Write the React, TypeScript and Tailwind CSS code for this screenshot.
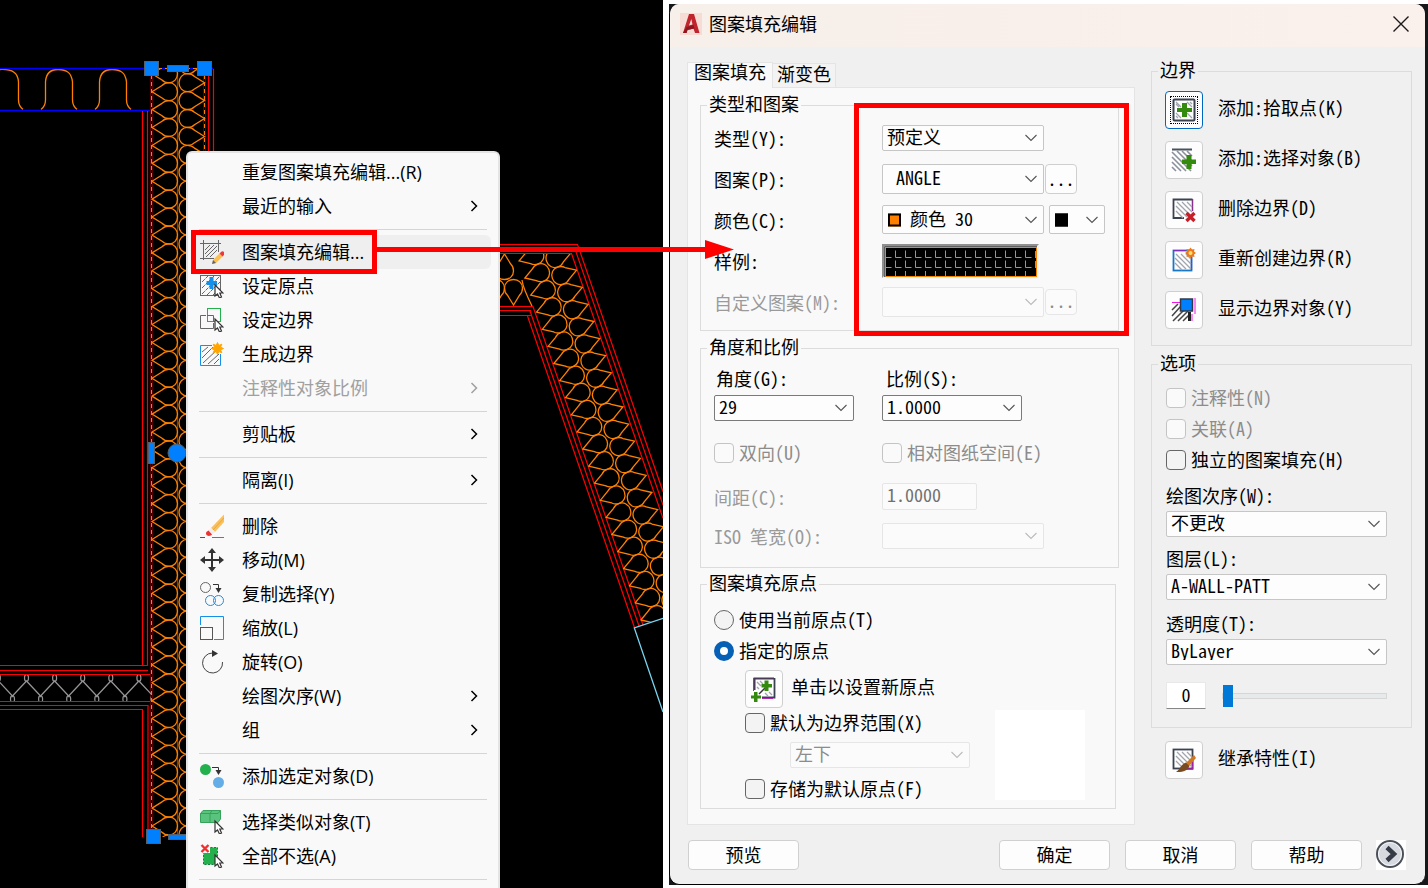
import { type ReactNode, useId } from 'react'

const range = (n: number, from = 0) => Array.from({ length: n }, (_, i) => i + from)

/* ---------- CAD drawing ---------- */

const DROP = 'M0 0 L10 -6.2 C12 -8.4 14.5 -9 17 -9 C22 -9 25.5 -5 25.5 0 C25.5 5 22 9 17 9 C14.5 9 12 8.4 10 6.2 Z'

function Drawing() {
  return (
    <svg className="absolute inset-0 size-full" aria-hidden="true" fill="none">
      <defs>
        <clipPath id="wall-v"><rect x="150" y="69" width="56" height="768" /></clipPath>
        <clipPath id="wall-d"><path d="M498 254 H572 L700 625 L660 618 L642 625 L533 307 H498 Z" /></clipPath>
        <clipPath id="wall-h"><rect x="0" y="675" width="151" height="26" /></clipPath>
      </defs>

      <g stroke="#ff8000" strokeWidth="1.300">
        <path d="M0 69.500 C13 69 18 73 18.500 82 V100 C18.500 105 20 107 23 109.500" />
        {[0, 54].map((dx) => (
          <path key={dx} transform={`translate(${dx} 0)`} d="M41 109.500 C44 107 45.500 104 45.500 100 V82 C46 73 50 69.500 58 69.500 C67 69.500 71.500 73 72.500 82 V100 C72.500 104 74 107 77 109.500" />
        ))}
      </g>
      <path d="M0 68.500 H213 M0 110.500 H151" stroke="#0000ff" strokeWidth="1.400" />
      <path d="M208.500 69 V160 M213.500 69 V160 M142.500 111 V665 M147.500 111 V666 M0 665.500 H148 M0 670.500 H148 M0 674.500 H151 M0 701.500 H151 M0 705.500 H148 V831 M0 709.500 H142.500 V837" stroke="#ff0000" strokeWidth="1.200" />
      <path d="M150.500 69 V836 M152.500 69 V836 M203.500 69 V160 M205.500 69 V160" stroke="#5a0000" />
      <path d="M151.500 75 V836 M204.500 75 V160 M158 68.500 H197" stroke="#ff8000" strokeDasharray="4 3" />

      <g clipPath="url(#wall-v)" stroke="#ff8000" strokeWidth="1.300">
        {range(44, -1).map((i) => (
          <g key={i}>
            <path transform={`translate(152 ${91.7 + i * 17.91})`} d={DROP} />
            <path transform={`translate(204.500 ${82.7 + i * 17.91}) scale(-1 1)`} d={DROP} />
          </g>
        ))}
        <path d="M177.500 70 V836" strokeOpacity="0.5" />
      </g>

      <g clipPath="url(#wall-h)" stroke="#969696" strokeWidth="1.200">
        {range(7, -1).map((i) => (
          <g key={i} transform={`translate(${12.5 + i * 28.1} 0)`}>
            <path d="M-1 697 L14 681 L29 697" />
            <ellipse cx="0" cy="699" rx="2" ry="3.500" />
            <ellipse cx="14" cy="678" rx="2" ry="3.500" />
          </g>
        ))}
      </g>

      <path d="M498 244.500 H577.500 L663 491.700 M575 249 L663 505 M498 253.500 H571.500 L663 518.300 M498 306.500 H533 L643 625 M498 310.500 H531 M530 311 L639 626 M498 315.500 H531 M527.500 316 L634.500 627.500" stroke="#ff0000" strokeWidth="1.200" />
      <g clipPath="url(#wall-d)" stroke="#ff8000" strokeWidth="1.300">
        {range(22, -4).map((i) => (
          <path key={`l${i}`} transform={`translate(${542.3 + i * 5.8} ${329.3 + i * 17.1}) rotate(-18.7)`} d={DROP} />
        ))}
        {range(23, -2).map((i) => (
          <path key={`r${i}`} transform={`translate(${582.3 + i * 5.8} ${287.3 + i * 17.1}) rotate(-18.7) scale(-1 1)`} d={DROP} />
        ))}
        <path transform="translate(513.500 305) rotate(-90)" d={DROP} />
        <path transform="translate(495.500 305) rotate(-90)" d={DROP} />
        <path transform="translate(504.500 254) rotate(90)" d={DROP} />
        <path d="M522 280 C523 288 527 296 532 306" />
      </g>
      <path d="M663 618.300 L634.300 628 L663 712" stroke="#7ad4f0" strokeWidth="1.300" />

      <g fill="#0080ff" stroke="#55606c">
        <rect x="144.500" y="61.500" width="14" height="14" />
        <rect x="197.500" y="61.500" width="14" height="14" />
        <rect x="167.500" y="65.500" width="21" height="6" />
        <rect x="146.500" y="829.500" width="14" height="14" />
        <rect x="168.500" y="834.500" width="21" height="5" />
        <rect x="148.500" y="442.500" width="6" height="21" />
        <circle cx="177" cy="453" r="9" />
      </g>
    </svg>
  )
}

/* ---------- Icons of the context menu ---------- */

const CURSOR = 'M15 11 V22 L17.500 20 L19.500 24 L21.500 23 L19.800 19 H23 Z'

const Cursor = () => <path d={CURSOR} fill="#fff" stroke="#333" strokeWidth="1.200" />

const HATCH = 'M2 8 L8 2 M2 14 L14 2 M2 20 L20 2 M7 21 L21 7 M13 21 L21 13'

function Glyph({ children }: { children?: ReactNode }) {
  return <svg className="size-6 shrink-0" viewBox="0 0 24 24" fill="none" aria-hidden="true">{children}</svg>
}

const icons: Record<string, ReactNode> = {
  edit: (
    <>
      <path d="M3.500 0 V20 M18.500 0 V12 M0 3.500 H21 M0 18.500 H14" stroke="#666" />
      <path d="M5 10 L10 5 M5 14 L14 5 M6 17 L17 6 M10 17 L17 10" stroke="#666" />
      <path d="M13 20 L19.500 13.500 L22.500 16.500 L16 23 L12.500 23.800 Z" fill="#fbbf4a" />
      <path d="M12 24 L13 20 L16 23 Z" fill="#666" />
      <path d="M19.500 13.500 L21 12 A2 2 0 0 1 24 15 L22.500 16.500 Z" fill="#f03838" />
    </>
  ),
  origin: (
    <>
      <rect x="0.500" y="1.500" width="20" height="20" stroke="#666" />
      <path d={HATCH} stroke="#666" strokeDasharray="4 1" />
      <path d="M9.500 3 H13.500 V7 H17 V11 H13.500 V15 H9.500 V11 H6.500 V7 H9.500 Z" fill="#1590ea" />
      <Cursor />
    </>
  ),
  boundary: (
    <>
      <path d="M6 7.500 H0.500 V20.500 H13.500 V15" stroke="#666" />
      <rect x="7.500" y="0.500" width="13" height="13" stroke="#22b14c" />
      <path d="M7 7.500 H13.500 V14" stroke="#666" />
      <Cursor />
    </>
  ),
  generate: (
    <>
      <path d="M12 3.500 H0.500 V23.500 H20.500 V12" stroke="#1590ea" />
      <path d="M2 10 L8 5 M2 16 L13 5 M3 21 L18 7 M8 22 L19 12 M14 22 L19 17" stroke="#666" />
      <path d="M17.500 0.500 l1.300 3 3-1.300 -1.300 3 3 1.300 -3 1.300 1.300 3 -3-1.300 -1.300 3 -1.300-3 -3 1.300 1.300-3 -3-1.300 3-1.300 -1.300-3 3 1.300 Z" fill="#ffa500" stroke="#ffa500" />
    </>
  ),
  erase: (
    <>
      <path d="M0 23.500 H5" stroke="#555" />
      <path d="M12 23.500 H24" stroke="#1590ea" />
      <path d="M11 14 L24 0.500 V8 L15 18 Z" fill="#fbc05a" />
      <path d="M24 4 L13 16" stroke="#e5a840" />
      <path d="M8.500 16.500 L11 14 L15 18 L12 20.500 Z" fill="#eee" />
      <path d="M8.500 16.500 L12 20.500 C10 23 6 22 6 19.500 C6 18 7 17.500 8.500 16.500 Z" fill="#f03030" />
    </>
  ),
  move: (
    <>
      <path d="M12 3 V21 M3 12 H21" stroke="#333" strokeWidth="2" />
      <path d="M12 0 L16 5 H8 Z M12 24 L16 19 H8 Z M0 12 L5 8 V16 Z M24 12 L19 8 V16 Z" fill="#333" />
    </>
  ),
  copy: (
    <>
      <circle cx="5.500" cy="5.500" r="5" stroke="#666" />
      <circle cx="10.500" cy="18.500" r="5" stroke="#1590ea" />
      <circle cx="18.500" cy="18.500" r="5" stroke="#1590ea" />
      <path d="M13 2.500 H18.500 V7" stroke="#333" />
      <path d="M15.500 6 H21.500 L18.500 11 Z" fill="#333" />
    </>
  ),
  scale: (
    <>
      <path d="M0.500 9 V0.500 H23.500 V23.500 H14" stroke="#1590ea" />
      <rect x="0.500" y="11.500" width="12" height="12" stroke="#555" />
    </>
  ),
  rotate: (
    <>
      <path d="M22.500 12 A10 10 0 1 1 12.500 3" stroke="#444" />
      <path d="M12 0 L18 3.500 L12 7 Z" fill="#333" />
    </>
  ),
  add: (
    <>
      <circle cx="5.500" cy="5.500" r="5.500" fill="#22b14c" />
      <circle cx="18.500" cy="18.500" r="5.500" fill="#64aee8" />
      <path d="M12 3.500 H18.500 V7" stroke="#333" />
      <path d="M15.500 6 H21.500 L18.500 11 Z" fill="#333" />
    </>
  ),
  similar: (
    <>
      <path d="M0.500 3.500 L3 0.500 H20.500 V9 L18 12.500 H0.500 Z" fill="#5ac37d" stroke="#35a35a" />
      <path d="M0.500 3.500 H18 L20.500 0.500 M10 12 V3.500 L12 0.500" stroke="#35a35a" />
      <Cursor />
    </>
  ),
  deselect: (
    <>
      <rect x="3.500" y="3.500" width="14" height="17" fill="#22b14c" stroke="#15803d" strokeDasharray="2 1.500" />
      <path d="M0 0 H10 V9 H0 Z" fill="#f9f9f9" />
      <path d="M1.500 1 L8.500 8 M8.500 1 L1.500 8" stroke="#f03030" strokeWidth="2.400" />
      <Cursor />
    </>
  ),
}

type MenuItem = { label: string; icon?: string; sub?: boolean; off?: boolean; active?: boolean }

const menu: MenuItem[][] = [
  [{ label: '重复图案填充编辑...(R)' }, { label: '最近的输入', sub: true }],
  [
    { label: '图案填充编辑...', icon: 'edit', active: true },
    { label: '设定原点', icon: 'origin' },
    { label: '设定边界', icon: 'boundary' },
    { label: '生成边界', icon: 'generate' },
    { label: '注释性对象比例', sub: true, off: true },
  ],
  [{ label: '剪贴板', sub: true }],
  [{ label: '隔离(I)', sub: true }],
  [
    { label: '删除', icon: 'erase' },
    { label: '移动(M)', icon: 'move' },
    { label: '复制选择(Y)', icon: 'copy' },
    { label: '缩放(L)', icon: 'scale' },
    { label: '旋转(O)', icon: 'rotate' },
    { label: '绘图次序(W)', sub: true },
    { label: '组', sub: true },
  ],
  [{ label: '添加选定对象(D)', icon: 'add' }],
  [{ label: '选择类似对象(T)', icon: 'similar' }, { label: '全部不选(A)', icon: 'deselect' }],
]

function ContextMenu() {
  return (
    <nav className="absolute top-[151px] bottom-0 left-[186px] w-[314px] overflow-hidden rounded-t-md border-2 border-b-0 border-[#e4e4e4] bg-[#f9f9f9] pt-0.5 font-['Open_Sans','Noto_Sans_CJK_SC',sans-serif] text-[18px] text-black">
      {menu.map((group, g) => (
        <div key={g}>
          {group.map((item) => (
            <button
              key={item.label}
              type="button"
              disabled={item.off}
              className={`mr-[7px] ml-1 flex h-[34px] w-[299px] items-center gap-[18px] rounded-md pr-[11px] pl-2 text-left leading-6 disabled:text-[#a0a0a0] ${item.active ? 'bg-[#efefef]' : ''}`}
            >
              <Glyph>{item.icon && icons[item.icon]}</Glyph>
              <span className="grow whitespace-nowrap">{item.label}</span>
              {item.sub && (
                <svg className="size-3" viewBox="0 0 12 12" fill="none" aria-hidden="true">
                  <path d="M3.500 1 L8.500 6 L3.500 11" stroke="currentColor" strokeWidth="1.500" />
                </svg>
              )}
            </button>
          ))}
          <div className="mx-[11px] mt-1.5 mb-[5px] h-px bg-[#d5d5d5]" />
        </div>
      ))}
    </nav>
  )
}

/* ---------- Dialog parts ---------- */

function Group({ title, className, children }: { title: string; className?: string; children: ReactNode }) {
  return (
    <fieldset className={`min-w-0 border border-[#dcdcdc] ${className ?? ''}`}>
      <legend className="ml-1.5 h-6 px-0.5 leading-5">{title}</legend>
      {children}
    </fieldset>
  )
}

function Select({ id, value, label, className, box, disabled, swatch }: {
  id?: string; value: string; label?: string; className: string; box?: string; disabled?: boolean; swatch?: string
}) {
  return (
    <span className={`relative block ${className}`}>
      <select
        id={id}
        aria-label={label}
        disabled={disabled}
        className={`block size-full appearance-none rounded-[2px] border pb-1 leading-5 ${swatch ? 'pl-[27px]' : 'pl-1'} ${disabled ? 'border-[#e6e6e6] bg-[#fbfbfb] text-[#8c8c8c]' : `bg-[#fdfdfd] ${box ?? 'border-[#c6c6c6]'}`} disabled:opacity-100`}
      >
        <option>{value}</option>
      </select>
      {swatch && <span className={`absolute top-1/2 left-1.5 size-[13px] -translate-y-1/2 border-2 border-black ${swatch}`} />}
      <svg className={`pointer-events-none absolute top-1/2 right-[7px] size-3 -translate-y-1/2 ${disabled ? 'text-[#bbb]' : 'text-[#555]'}`} viewBox="0 0 12 12" fill="none" aria-hidden="true">
        <path d="M0.500 3 L6 8.500 L11.500 3" stroke="currentColor" strokeWidth="1.100" />
      </svg>
    </span>
  )
}

function Tick({ label, disabled, kind = 'checkbox', checked, name }: {
  label: string; disabled?: boolean; kind?: 'checkbox' | 'radio'; checked?: boolean; name?: string
}) {
  return (
    <label className={`flex h-6 items-center gap-[5px] whitespace-nowrap ${disabled ? 'text-[#8c8c8c]' : ''}`}>
      <input
        type={kind}
        name={name}
        disabled={disabled}
        defaultChecked={checked}
        className={`size-5 shrink-0 appearance-none border border-[#666] bg-[#f3f3f3] disabled:border-[#c4c4c4] disabled:bg-[#fafafa] ${kind === 'radio' ? 'rounded-full checked:border-[6px] checked:border-[#0560b6] checked:bg-white' : 'rounded-[4px]'}`}
      />
      <span className="h-6 leading-[22px]">{label}</span>
    </label>
  )
}

const TOOL_HATCH = 'M4 8 L15 19 M4 13 L11 20 M5 4 L20 19 M10 4 L20 14 M15 4 L20 9'

const toolIcons: Record<string, ReactNode> = {
  pick: (
    <>
      <rect x="1.500" y="1.500" width="21" height="21" rx="1" stroke="#3a4250" strokeWidth="2" />
      <path d="M4 6 L7 9 M4 4 L9 9 M15 4 L20 9 M18 4 L20 6 M4 15 L9 20 M4 18 L6 20 M15 15 L20 20" stroke="#a0a4ac" strokeWidth="1.200" />
      <path d="M10 5 H15 V10 H20 V14 H15 V19 H10 V14 H5 V10 H10 Z" fill="#338a0e" />
    </>
  ),
  select: (
    <>
      <path d="M0 1.500 H20" stroke="#4a5260" strokeWidth="2" />
      <path d="M0 4 L19 23 M0 9 L14 23 M0 14 L9 23 M0 19 L4 23 M5 3 L20 18 M10 3 L20 13 M15 3 L20 8" stroke="#8a909c" strokeWidth="1.600" />
      <path d="M14.500 7 H19.500 V11.500 H24 V16 H19.500 V21 H14.500 V16 H10 V11.500 H14.500 Z" fill="#338a0e" />
    </>
  ),
  remove: (
    <>
      <path d="M12 20 H1.500 V1.500 H20.500" stroke="#3a4250" strokeWidth="1.800" />
      <path d="M20.500 1 V13" stroke="#86308a" strokeWidth="1.500" />
      <path d={TOOL_HATCH} stroke="#a0a4ac" strokeWidth="1.300" />
      <path d="M14.500 15 L22.500 23 M22.500 15 L14.500 23" stroke="#c81e28" strokeWidth="3.400" />
    </>
  ),
  recreate: (
    <>
      <rect x="1.500" y="2.500" width="18" height="20" stroke="#1878c8" strokeWidth="1.800" />
      <path d="M1 2.500 H14 M19.500 8 V22" stroke="#7c30c0" strokeWidth="1.200" />
      <path transform="translate(-1 2)" d={TOOL_HATCH} stroke="#a0a4ac" strokeWidth="1.300" />
      <path d="M18.500 -0.500 l1.500 2 2.500-0.500 -0.500 2.500 2 1.500 -2 1.500 0.500 2.500 -2.500-0.500 -1.500 2 -1.500-2 -2.500 0.500 0.500-2.500 -2-1.500 2-1.500 -0.500-2.500 2.500 0.500 Z" fill="#f07818" />
      <circle cx="18.500" cy="5" r="2" fill="#ffe070" />
    </>
  ),
  show: (
    <>
      <path d="M0 4.500 H8 M23 0 V16 M20 16 V23" stroke="#f018e8" />
      <path d="M0 12 L6 6 M0 18 L9 8 M1 23 L12 12 M6 23 L16 13 M11 23 L17 17" stroke="#444" strokeWidth="1.500" />
      <path d="M17.500 14 V23" stroke="#222" strokeWidth="3" />
      <rect x="8.500" y="1" width="12" height="12" fill="#0080ff" stroke="#303848" strokeWidth="1.500" />
    </>
  ),
  inherit: (
    <>
      <rect x="1.500" y="1.500" width="19" height="19" stroke="#3a4250" strokeWidth="1.800" />
      <path d="M20.500 10 V21 H12" stroke="#a020a8" strokeWidth="1.600" />
      <path d={TOOL_HATCH} stroke="#a0a4ac" strokeWidth="1.300" />
      <path d="M14 15 L22 7 L24 10 L17 18 Z" fill="#d07820" />
      <path d="M14 14.500 L17.500 18 C15 24 9 24 4 24 C8 22 8 17 14 14.500 Z" fill="#7a4a20" />
    </>
  ),
  origin: (
    <>
      <path d="M2.500 13 V1.500 H22" stroke="#4a3a58" strokeWidth="2" />
      <path d="M22.500 1 V20.500 H10" stroke="#3a4250" strokeWidth="1.800" />
      <path d="M10 21.500 H21 M1.500 1 V14" stroke="#b028b8" />
      <path d="M5 5 L9 9 M8 4 L11 7 M5 10 L7 12 M13 16 L16 19 M17 15 L20 18" stroke="#a0a4ac" strokeWidth="1.300" />
      <path d="M7 17 L14 10" stroke="#333" strokeWidth="1.500" />
      <path d="M12.500 3.500 H16.500 V7 H20 V10.500 H16.500 V14 H12.500 V10.500 H9.500 V7 H12.500 Z M2 15 H5.500 V18.500 H9 V21.500 H5.500 V25 H2 V21.500 H-1 V18.500 H2 Z" fill="#338a0e" />
    </>
  ),
}

function Tool({ icon, label, focus }: { icon: string; label: string; focus?: boolean }) {
  const id = useId()
  return (
    <div className="flex items-center">
      <button
        type="button"
        aria-labelledby={id}
        className={`grid size-[38px] shrink-0 place-items-center rounded-[4px] border bg-[#fdfdfd] ${focus ? 'border-[#0067c0]' : 'border-[#cfcfcf]'}`}
      >
        <span className={`grid size-7 place-items-center ${focus ? 'border border-dotted border-black' : ''}`}>
          <svg className="size-6 overflow-visible" viewBox="0 0 24 24" fill="none" aria-hidden="true">{toolIcons[icon]}</svg>
        </span>
      </button>
      <span id={id} className="pb-1.5 leading-6 whitespace-nowrap">{label}</span>
    </div>
  )
}

function PushButton({ children }: { children: string }) {
  return (
    <button type="button" className="h-[30px] w-[111px] rounded-[4px] border border-[#d0d0d0] bg-[#fdfdfd] pb-0.5 leading-6">{children}</button>
  )
}

const SAMPLE_PATH = [
  ...[13.5, 23.5].flatMap((y) => range(15).map((i) => `M${3.5 + i * 10} ${y - 7} v7 h6`)),
  ...range(15).map((i) => `M${3.5 + i * 10} 27 v5`),
  'M153.5 7 v7 M153.5 17 v7',
].join(' ')

function Sample() {
  return (
    <svg className="h-[34px] w-[157px]" viewBox="0 0 157 34" role="img" aria-label="ANGLE">
      <rect width="157" height="34" fill="#f4f4f4" />
      <path d="M0 0 H157 L155 2 H2 V32 L0 34 Z" fill="#909090" />
      <rect x="3.500" y="3.500" width="151" height="29" fill="#000" stroke="#ff8000" />
      <path d="M2.500 33 V2.500 H155" stroke="#606060" fill="none" />
      <path d={SAMPLE_PATH} stroke="#ff8000" fill="none" />
    </svg>
  )
}

const rowLabel = 'leading-6 whitespace-nowrap'

function TypeGroup() {
  return (
    <Group title="类型和图案">
      <div className="grid auto-rows-[41px] grid-cols-[168px_1fr] items-center pb-2 pl-[13px]">
        <label htmlFor="type" className={rowLabel}>类型(Y):</label>
        <Select id="type" value="预定义" className="h-[26px] w-[162px]" />
        <label htmlFor="pattern" className={rowLabel}>图案(P):</label>
        <div className="flex gap-px">
          <Select id="pattern" value={'\u00a0ANGLE'} className="h-[30px] w-[162px]" />
          <button type="button" aria-label="浏览图案" className="h-[30px] w-8 rounded-[4px] border border-[#cfcfcf] bg-[#fdfdfd]">...</button>
        </div>
        <label htmlFor="color" className={rowLabel}>颜色(C):</label>
        <div className="flex gap-[5px]">
          <Select id="color" value="颜色 30" className="h-[29px] w-[162px]" swatch="bg-[#ff8000]" />
          <Select label="背景色" value="" className="h-[29px] w-14" swatch="bg-black" />
        </div>
        <span className={rowLabel}>样例:</span>
        <Sample />
        <label htmlFor="custom" className={`${rowLabel} text-[#9a9a9a]`}>自定义图案(M):</label>
        <div className="flex items-center gap-px">
          <Select id="custom" value="" disabled className="h-[30px] w-[162px]" />
          <button type="button" disabled aria-label="浏览自定义图案" className="h-[26px] w-8 rounded-[4px] border border-[#e6e6e6] bg-[#fbfbfb] pb-1 leading-5 text-[#8c8c8c]">...</button>
        </div>
      </div>
    </Group>
  )
}

function AngleGroup() {
  return (
    <Group title="角度和比例" className="mt-[5px]">
      <div className="grid grid-cols-[168px_1fr] items-center pt-[7px] pb-[18px] pl-[13px]">
        <label htmlFor="angle" className="h-6 pl-[2px] leading-[22px]">角度(G):</label>
        <label htmlFor="ratio" className="h-6 pl-1 leading-[22px]">比例(S):</label>
        <Select id="angle" value="29" className="mt-1 h-[26px] w-[140px]" box="border-[#7a7a7a]" />
        <Select id="ratio" value="1.0000" className="mt-1 h-[26px] w-[140px]" box="border-[#7a7a7a]" />
        <div className="mt-5"><Tick label="双向(U)" disabled /></div>
        <div className="mt-5"><Tick label="相对图纸空间(E)" disabled /></div>
        <label htmlFor="spacing" className={`${rowLabel} mt-[18px] text-[#9a9a9a]`}>间距(C):</label>
        <input id="spacing" disabled defaultValue="1.0000" className="mt-[18px] h-[27px] w-[95px] rounded-[2px] border border-[#e6e6e6] bg-[#fbfbfb] px-1 pb-1 text-[#707070]" />
        <label htmlFor="iso" className={`${rowLabel} mt-[13px] text-[#9a9a9a]`}>ISO 笔宽(O):</label>
        <Select id="iso" value="" disabled className="mt-[13px] h-[26px] w-[162px]" />
      </div>
    </Group>
  )
}

function OriginGroup() {
  return (
    <Group title="图案填充原点" className="mt-1 mr-[3px]">
      <div className="flex flex-col gap-[7px] pt-3 pb-[7px] pl-[13px]">
        <Tick kind="radio" name="origin" label="使用当前原点(T)" />
        <Tick kind="radio" name="origin" label="指定的原点" checked />
        <div className="flex justify-between pr-[30px] pl-[31px]">
          <div className="flex flex-col">
            <div className="*:gap-2">
              <Tool icon="origin" label="单击以设置新原点" />
            </div>
            <div className="mt-[3px]"><Tick label="默认为边界范围(X)" /></div>
            <Select label="边界范围位置" value="左下" disabled className="mt-[7px] ml-[45px] h-[26px] w-[180px]" />
            <div className="mt-[9px]"><Tick label="存储为默认原点(F)" /></div>
          </div>
          <div className="mt-10 size-[90px] bg-white" />
        </div>
      </div>
    </Group>
  )
}

function Dialog() {
  return (
    <section
      role="dialog"
      aria-label="图案填充编辑"
      className="flex min-w-0 flex-col overflow-hidden rounded-[10px] border-b border-l border-black bg-[#f0f0f0] font-['Noto_Sans_Mono_CJK_SC','Noto_Sans_CJK_SC',monospace] text-[18px] text-black"
    >
      <header className="flex h-[43px] items-center gap-[7px] bg-linear-to-r from-[#f7efea] to-[#faf0ec] pr-4 pb-1 pl-2.5 font-['Noto_Sans_CJK_SC',sans-serif]">
        <svg className="size-[22px]" viewBox="0 0 22 22" aria-hidden="true">
          <rect width="22" height="22" fill="#f6dcd4" />
          <path d="M3 20 L9 1 H14 L19.500 20 H15 L13.500 15.500 L7.500 17 L6.500 20 Z M9 12.500 L12.500 11.500 L11.300 6 Z" fill="#c0242c" fillRule="evenodd" />
          <path d="M3 20 L6.500 14 L13.500 12 L14.500 15.500 L7.500 17 L6.500 20 Z" fill="#8e161e" />
        </svg>
        <h1 className="h-6 grow leading-[22px]">图案填充编辑</h1>
        <button type="button" aria-label="关闭">
          <svg className="size-4" viewBox="0 0 16 16" aria-hidden="true"><path d="M0.500 0.500 L15.500 15.500 M15.500 0.500 L0.500 15.500" stroke="#1a1a1a" strokeWidth="1.400" /></svg>
        </button>
      </header>

      <div className="flex grow justify-between pr-[13px] pl-[17px]">
        <div className="w-[448px] pt-[15px]">
          <div role="tablist" className="flex items-end">
            <button role="tab" type="button" aria-selected="true" className="relative z-10 -mb-px h-[26px] border border-b-0 border-[#e4e4e4] bg-[#f9f9f9] px-1.5 pb-2.5 leading-4">图案填充</button>
            <button role="tab" type="button" aria-selected="false" className="h-6 border border-b-0 border-l-0 border-[#e4e4e4] bg-[#f3f3f3] px-1 pb-1.5 leading-4">渐变色</button>
          </div>
          <div role="tabpanel" className="border border-[#e4e4e4] bg-[#f9f9f9] pt-[5px] pr-[15px] pb-[15px] pl-3">
            <TypeGroup />
            <AngleGroup />
            <OriginGroup />
          </div>
        </div>

        <div className="w-[261px] pt-3">
          <Group title="边界">
            <div className="flex flex-col gap-3 pt-2 pb-4 pl-[13px] *:gap-[15px]">
              <Tool icon="pick" label="添加:拾取点(K)" focus />
              <Tool icon="select" label="添加:选择对象(B)" />
              <Tool icon="remove" label="删除边界(D)" />
              <Tool icon="recreate" label="重新创建边界(R)" />
              <Tool icon="show" label="显示边界对象(Y)" />
            </div>
          </Group>
          <Group title="选项" className="mt-[6px]">
            <div className="flex flex-col pt-2.5 pr-[24px] pb-[18px] pl-[14px]">
              <div className="flex flex-col gap-[7px]">
                <Tick label="注释性(N)" disabled />
                <Tick label="关联(A)" disabled />
                <Tick label="独立的图案填充(H)" />
              </div>
              <label htmlFor="order" className="mt-3 h-6 leading-[22px]">绘图次序(W):</label>
              <Select id="order" value="不更改" className="mt-[3px] h-[26px]" />
              <label htmlFor="layer" className="mt-2.5 h-6 leading-[22px]">图层(L):</label>
              <Select id="layer" value="A-WALL-PATT" className="mt-[3px] h-[26px]" />
              <label htmlFor="opacity" className="mt-3 h-6 leading-[22px]">透明度(T):</label>
              <Select id="opacity" value="ByLayer" className="mt-[3px] h-[26px]" />
              <div className="mt-[17px] flex items-center gap-4">
                <input aria-label="透明度数值" defaultValue="0" className="h-[27px] w-10 border border-[#e8e8e8] border-b-[#868686] bg-white pb-0.5 text-center" />
                <input
                  type="range"
                  aria-label="透明度"
                  min="0"
                  max="90"
                  defaultValue="0"
                  className="m-0 h-6 min-w-0 grow appearance-none bg-transparent [&::-webkit-slider-runnable-track]:h-1.5 [&::-webkit-slider-runnable-track]:border [&::-webkit-slider-runnable-track]:border-[#d6d6d6] [&::-webkit-slider-runnable-track]:bg-[#e7eaea] [&::-webkit-slider-thumb]:-mt-[9px] [&::-webkit-slider-thumb]:h-[22px] [&::-webkit-slider-thumb]:w-2.5 [&::-webkit-slider-thumb]:appearance-none [&::-webkit-slider-thumb]:bg-[#0078d7]"
                />
              </div>
            </div>
          </Group>
          <div className="mt-[13px] pl-[14px] *:gap-[15px]">
            <Tool icon="inherit" label="继承特性(I)" />
          </div>
        </div>
      </div>

      <footer className="flex items-center gap-[15px] pt-[13px] pr-[19px] pb-[14px] pl-[18px]">
        <PushButton>预览</PushButton>
        <div className="grow" />
        <PushButton>确定</PushButton>
        <PushButton>取消</PushButton>
        <PushButton>帮助</PushButton>
        <button type="button" aria-label="更多选项" className="-ml-px bg-white">
          <svg className="size-[30px]" viewBox="0 0 30 30" fill="none" aria-hidden="true">
            <circle cx="14" cy="14" r="13" fill="#d6dae0" stroke="#4a505a" strokeWidth="2" />
            <circle cx="14" cy="14" r="11.500" stroke="#f6f7f9" />
            <path d="M11 7.500 L18 14 L11 20.500" stroke="#343a46" strokeWidth="4.500" />
          </svg>
        </button>
      </footer>
    </section>
  )
}

export default function App() {
  return (
    <main className="relative grid min-h-screen grid-cols-[663fr_765fr] overflow-hidden bg-white">
      <div className="relative overflow-hidden bg-black">
        <Drawing />
        <ContextMenu />
      </div>
      <div className="flex flex-col pt-1 pb-[3px] pl-1.5">
        <div className="grid grow bg-[#15171a] pr-[3px]">
          <Dialog />
        </div>
      </div>

      <div className="pointer-events-none absolute top-[230px] left-[191px] h-[44px] w-[186px] border-[5px] border-[#ff0000]" />
      <div className="pointer-events-none absolute top-[103px] left-[854px] h-[233px] w-[275px] border-[5px] border-[#ff0000]" />
      <svg className="pointer-events-none absolute top-[240px] left-[376px] h-5 w-[360px]" aria-hidden="true">
        <path d="M0 7 H329 V0 L358 9.500 L329 19 V12 H0 Z" fill="#ff0000" />
      </svg>
    </main>
  )
}
